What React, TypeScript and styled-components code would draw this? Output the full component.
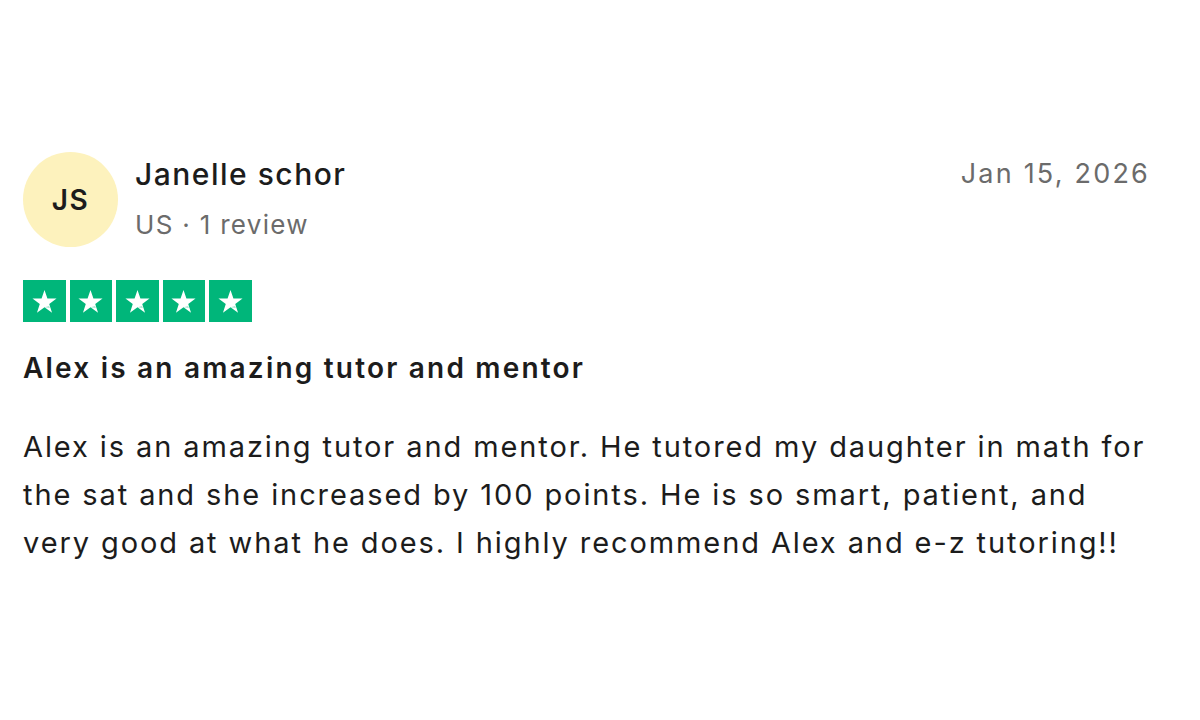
import React from 'react';
import styled, { createGlobalStyle } from 'styled-components';

const GlobalStyle = createGlobalStyle`
  html, body {
    margin: 0;
    padding: 0;
    background: #ffffff;
  }
  body {
    font-family: Inter, "Liberation Sans", sans-serif;
    color: #1c1c1c;
  }
`;

const Card = styled.article`
  width: 1200px;
  height: 720px;
  box-sizing: border-box;
  padding: 152px 50px 0 23px;
`;

const Header = styled.div`
  display: flex;
  align-items: flex-start;
`;

const Avatar = styled.div`
  width: 95px;
  height: 95px;
  border-radius: 50%;
  background: #fdf2bd;
  display: flex;
  align-items: center;
  justify-content: center;
  font-size: 28px;
  font-weight: 600;
  letter-spacing: 1.5px;
  color: #1c1c1c;
  flex-shrink: 0;
`;

const Who = styled.div`
  display: flex;
  flex-direction: column;
  margin-left: 17px;
  flex: 1;
`;

const Name = styled.div`
  font-size: 30px;
  font-weight: 500;
  line-height: 44px;
  letter-spacing: 1.5px;
`;

const Meta = styled.div`
  font-size: 26px;
  color: #6b6b6b;
  line-height: 36px;
  letter-spacing: 1.3px;
  margin-top: 11px;
`;

const DateText = styled.div`
  font-size: 27px;
  color: #6b6b6b;
  line-height: 44px;
  letter-spacing: 2.2px;
`;

const Stars = styled.div`
  display: flex;
  gap: 4px;
  margin-top: 33px;
`;

const StarBox = styled.div<{ $filled?: boolean }>`
  width: 42.5px;
  height: 42px;
  background: ${({ $filled }) => ($filled ? '#00b67a' : '#dcdce6')};
  display: flex;
  align-items: center;
  justify-content: center;
`;

const Title = styled.h2`
  margin: 23px 0 0;
  font-size: 28px;
  font-weight: 600;
  line-height: 46px;
  letter-spacing: 2.2px;
  color: #1c1c1c;
`;

const Body = styled.p`
  margin: 32px 0 0;
  font-size: 29px;
  line-height: 48px;
  letter-spacing: 1.9px;
  color: #1c1c1c;
  max-width: 1137px;
`;

const Star = () => (
  <svg width="27" height="27" viewBox="0 0 24 24">
    <path
      d="M12 1.8l2.6 7.6h8.1l-6.5 4.8 2.5 7.7L12 17.1l-6.7 4.8 2.5-7.7-6.5-4.8h8.1z"
      fill="#ffffff"
    />
    <path d="M16.1 15.9l.6 1.9L12 17.1z" fill="#00b67a" opacity="0.35" />
  </svg>
);

const App: React.FC = () => {
  const rating = 5;
  return (
    <>
      <GlobalStyle />
      <Card>
        <Header>
          <Avatar>JS</Avatar>
          <Who>
            <Name>Janelle schor</Name>
            <Meta>US · 1 review</Meta>
          </Who>
          <DateText>Jan 15, 2026</DateText>
        </Header>
        <Stars>
          {[1, 2, 3, 4, 5].map((i) => (
            <StarBox key={i} $filled={i <= rating}>
              <Star />
            </StarBox>
          ))}
        </Stars>
        <Title>Alex is an amazing tutor and mentor</Title>
        <Body>
          Alex is an amazing tutor and mentor. He tutored my daughter in math for the sat and she
          increased by 100 points. He is so smart, patient, and very good at what he does. I highly
          recommend Alex and e-z tutoring!!
        </Body>
      </Card>
    </>
  );
};

export default App;
